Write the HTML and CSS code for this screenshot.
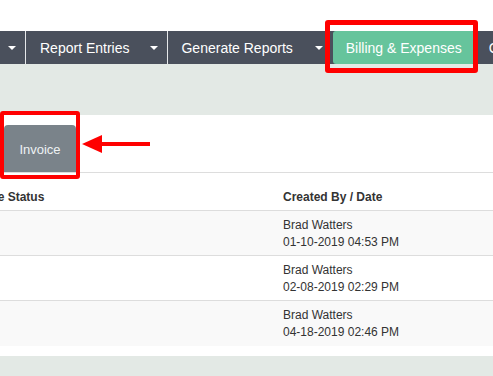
FILE: index.html
```html
<!DOCTYPE html>
<html lang="en">

<head>
    <meta charset="UTF-8">
    <title>Billing &amp; Expenses - Invoice</title>
    <link rel="stylesheet" href="styles.css">
</head>

<body>

    <div class="topbar"></div>

    <!-- Barra de navegacion -->
    <nav class="navbar">
        <div class="nav-item first"><span class="caret"></span></div>
        <div class="nav-item"><span>Report Entries</span><span class="caret"></span></div>
        <div class="nav-item plain"><span>Generate Reports</span><span class="caret"></span></div>
        <div class="nav-item active"><span>Billing &amp; Expenses</span></div>
        <div class="nav-item last"><span>Configuration</span></div>
    </nav>

    <div class="spacer"></div>

    <!-- Panel con pestana y tabla -->
    <div class="panel">
        <div class="tabs">
            <div class="tab">Invoice</div>
        </div>

        <table class="grid">
            <thead>
                <tr>
                    <th class="col-status">Invoice Status</th>
                    <th>Created By / Date</th>
                </tr>
            </thead>
            <tbody>
                <tr>
                    <td></td>
                    <td>Brad Watters<br>01-10-2019 04:53 PM</td>
                </tr>
                <tr>
                    <td></td>
                    <td>Brad Watters<br>02-08-2019 02:29 PM</td>
                </tr>
                <tr>
                    <td></td>
                    <td>Brad Watters<br>04-18-2019 02:46 PM</td>
                </tr>
            </tbody>
        </table>
    </div>

    <!-- Marcas de la captura -->
    <div class="mark mark-billing"></div>
    <div class="mark mark-invoice"></div>
    <svg class="pointer" width="70" height="22" viewBox="0 0 70 22">
        <polygon points="0 10, 20 1, 20 19" fill="#ff0000" />
        <line x1="18" y1="10" x2="68" y2="10" stroke="#ff0000" stroke-width="4" />
    </svg>

</body>

</html>
```

FILE: styles.css
```css
body {
    margin: 0;
    padding: 0;
    width: 493px;
    height: 376px;
    overflow: hidden;
    position: relative;
    background-color: #e3e9e5;
    font-family: "Liberation Sans", Arial, sans-serif;
    color: #333333;
}

.topbar {
    height: 31px;
    background-color: #ffffff;
}

.navbar {
    display: flex;
    height: 33px;
    background-color: #4a505c;
    white-space: nowrap;
}

.nav-item {
    display: flex;
    align-items: center;
    flex-shrink: 0;
    padding: 0 9px 0 14px;
    font-size: 14px;
    color: #ffffff;
    border-right: 1px solid #e6e8ea;
}

.nav-item.first {
    padding-left: 8px;
}

.nav-item.plain {
    padding-left: 13px;
    padding-right: 10px;
    border-right: none;
}

.nav-item.first .caret {
    margin-left: 0;
}

.caret {
    display: inline-block;
    width: 0;
    height: 0;
    margin-left: 21px;
    border-top: 4px solid #ffffff;
    border-left: 4px solid transparent;
    border-right: 4px solid transparent;
}

.nav-item.plain .caret {
    margin-left: 22px;
}

.nav-item.active {
    padding: 0 13px;
    background-color: #66c49c;
    border-radius: 3px;
    border-right: none;
}

.nav-item.last {
    padding-left: 14px;
    border-right: none;
}

.spacer {
    height: 51px;
}

.panel {
    background-color: #ffffff;
    padding: 10px 0 10px 0;
}

.tabs {
    display: flex;
    padding-left: 4px;
    height: 47px;
}

.tab {
    width: 72px;
    display: flex;
    align-items: center;
    justify-content: center;
    padding-top: 2px;
    box-sizing: border-box;
    background-color: #7a838a;
    border-radius: 4px 4px 0 0;
    font-size: 13px;
    color: #eef2f4;
}

.grid {
    border-collapse: collapse;
    table-layout: fixed;
    width: 640px;
    margin-left: -45px;
    font-size: 12px;
}

.grid th,
.grid td {
    padding: 0 8px;
    text-align: left;
    line-height: 17px;
    border-top: 1px solid #dddddd;
    box-sizing: border-box;
}

.grid th {
    height: 38px;
    vertical-align: bottom;
    padding-bottom: 4px;
    font-weight: bold;
}

.grid .col-status {
    width: 320px;
}

.grid td {
    height: 45px;
    vertical-align: top;
    padding-top: 6px;
}

.grid tbody tr:nth-child(odd) {
    background-color: #f9f9f9;
}

.mark {
    position: absolute;
    border: 5px solid #ff0000;
    border-radius: 3px;
    box-sizing: border-box;
}

.mark-billing {
    left: 325px;
    top: 20px;
    width: 153px;
    height: 53px;
}

.mark-invoice {
    left: 0;
    top: 111px;
    width: 80px;
    height: 68px;
    border-width: 4px;
}

.pointer {
    position: absolute;
    left: 82px;
    top: 134px;
}
```
